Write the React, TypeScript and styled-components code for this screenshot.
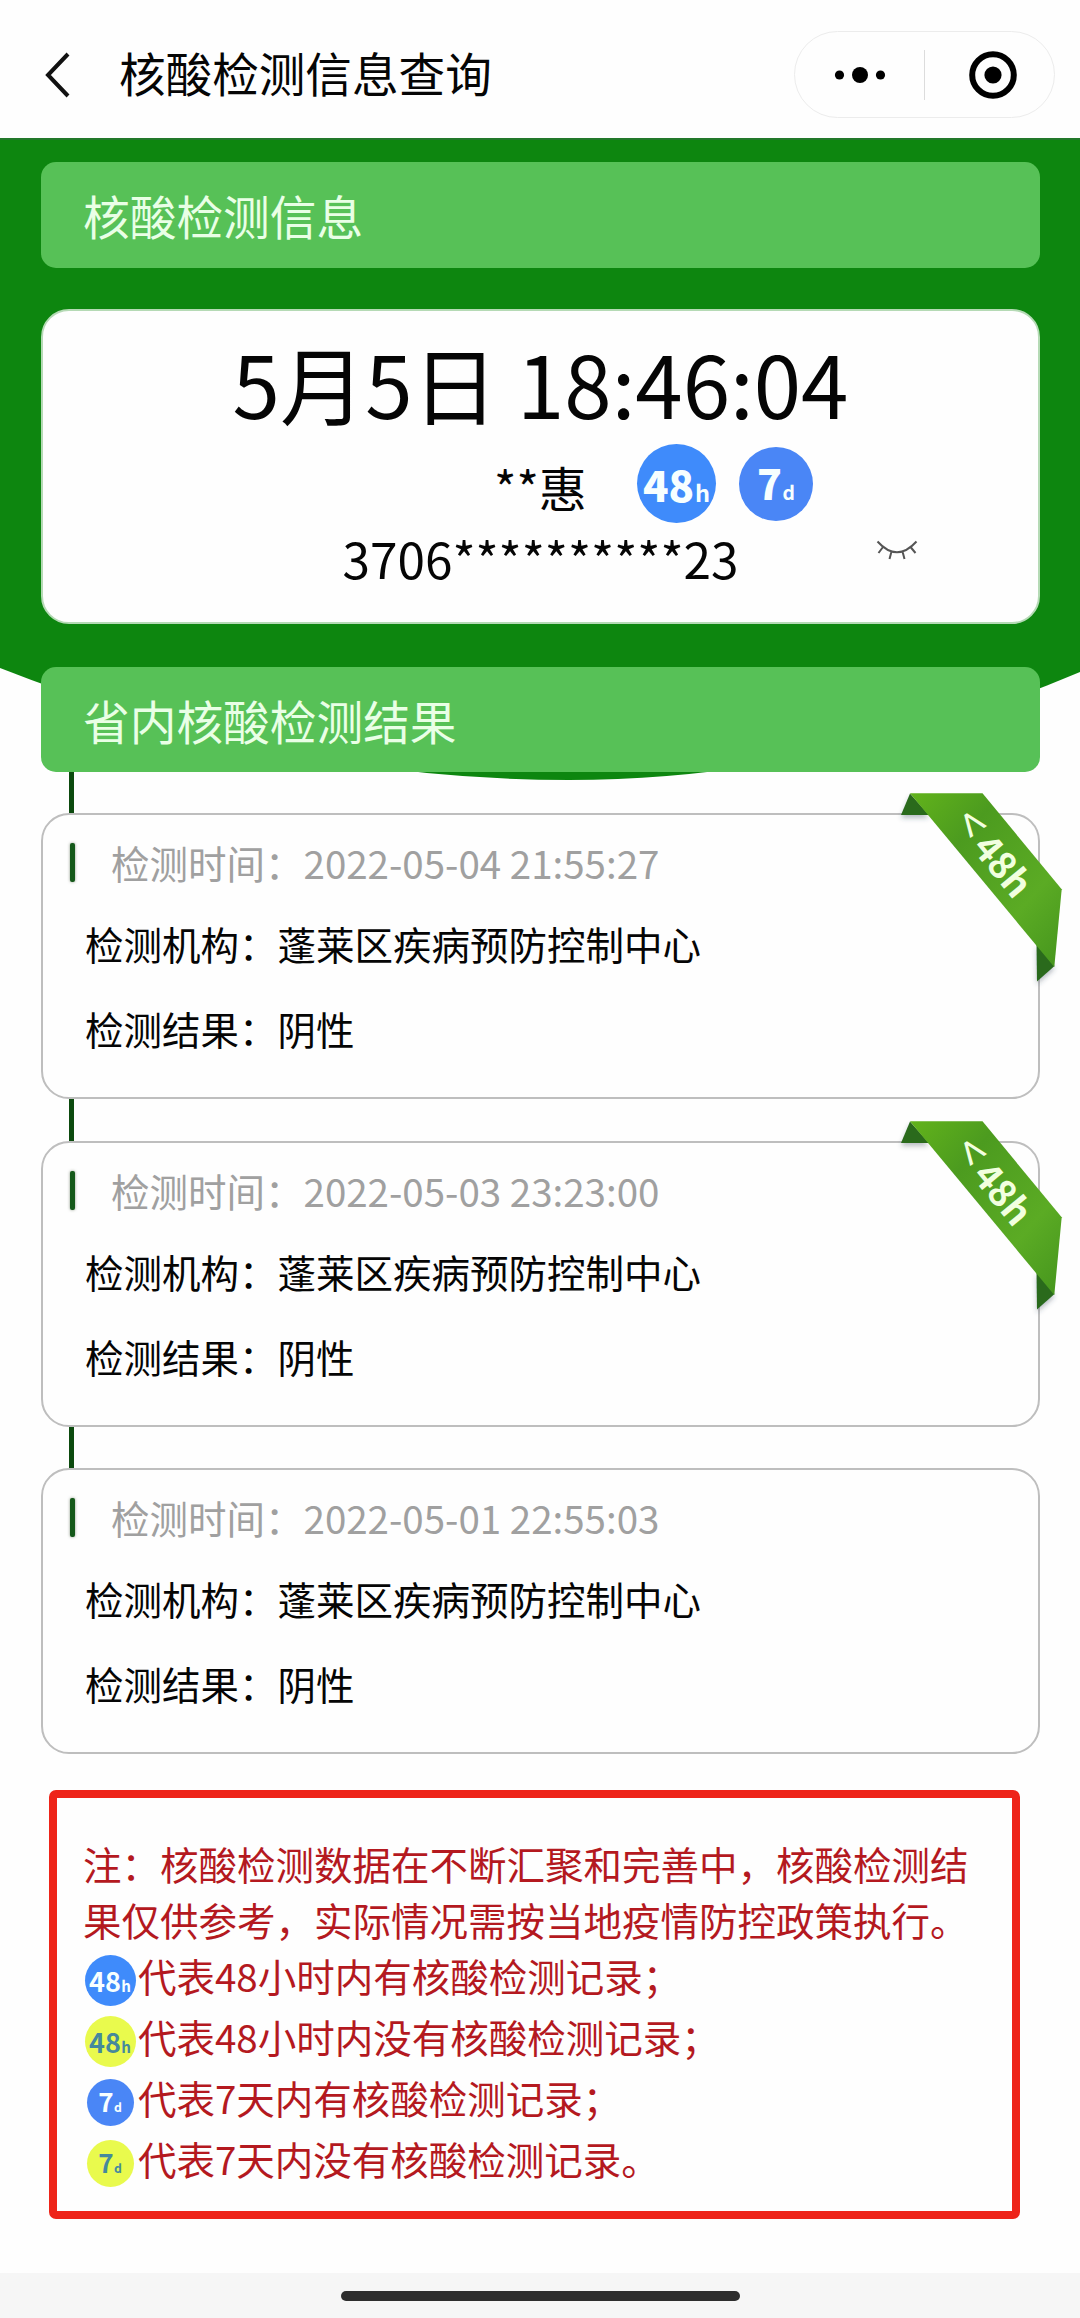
import React from "react";
import styled, { createGlobalStyle } from "styled-components";

const GlobalStyle = createGlobalStyle`
  * { box-sizing: border-box; }
  body {
    margin: 0;
    background: #fefefe;
    color: #050505;
    font-family: "Noto Sans CJK SC", "Noto Sans", sans-serif;
  }
`;

const Page = styled.div`
  width: 1080px;
  height: 2318px;
  display: flex;
  flex-direction: column;
  overflow: hidden;
`;

const Header = styled.header`
  height: 138px;
  flex: none;
  display: flex;
  align-items: center;
  padding: 11px 25px 0 45px;
`;

const BackIcon = styled.svg`
  width: 26px;
  height: 48px;
  flex: none;
`;

const Title = styled.h1`
  margin: 0 auto 0 48px;
  padding-bottom: 5px;
  font-size: 46.6px;
  line-height: 60px;
  font-weight: 400;
  white-space: nowrap;
`;

const Capsule = styled.div`
  width: 261px;
  height: 87px;
  display: flex;
  align-items: center;
  border: 1px solid #ececec;
  border-radius: 44px;
`;

const CapsuleButton = styled.div`
  flex: 1;
  display: flex;
  align-items: center;
  justify-content: center;
`;

const CapsuleDivider = styled.div`
  width: 1px;
  height: 50px;
  background: #dcdcdc;
`;

const Main = styled.main`
  position: relative;
  flex: 1;
  display: flex;
  flex-direction: column;
  padding: 24px 40px 0 41px;
`;

const Backdrop = styled.svg`
  position: absolute;
  left: 0;
  top: 0;
  z-index: -1;
`;

const SectionBar = styled.h2<{ $height: number }>`
  margin: 0;
  flex: none;
  height: ${(p) => p.$height}px;
  padding-left: 42px;
  display: flex;
  align-items: center;
  border-radius: 15px;
  background: #57c157;
  color: #e9ffe6;
  font-size: 46.7px;
  line-height: 60px;
  font-weight: 400;
`;

const InfoCard = styled.section`
  flex: none;
  height: 315px;
  margin: 41px 0 43px;
  padding-top: 21px;
  border: 2px solid #b5dab5;
  border-radius: 28px;
  background: #fefefe;
`;

const DateTime = styled.div`
  height: 100px;
  line-height: 100px;
  font-size: 85.3px;
  text-align: center;
  white-space: pre;
`;

const NameRow = styled.div`
  margin-top: 11px;
  height: 81px;
  padding-left: 451px;
  display: flex;
  align-items: center;
`;

const Name = styled.span`
  width: 143px;
  padding-top: 5px;
  font-size: 48px;
  line-height: 60px;
`;

const IdRow = styled.div`
  margin-top: 4px;
  height: 60px;
  display: grid;
  grid-template-columns: 1fr auto 1fr;
  align-items: center;
`;

const IdNumber = styled.span`
  grid-column: 2;
  font-size: 49.5px;
  line-height: 60px;
`;

const EyeIcon = styled.svg`
  align-self: start;
  margin: 12px 0 0 137px;
  width: 42px;
  height: 20px;
`;

const Circle = styled.span<{
  $size: number;
  $bg: string;
  $fg: string;
  $font: number;
  $lift: number;
  $weight: number;
}>`
  flex: none;
  width: ${(p) => p.$size}px;
  height: ${(p) => p.$size}px;
  border-radius: 50%;
  display: flex;
  align-items: baseline;
  justify-content: center;
  background: ${(p) => p.$bg};
  color: ${(p) => p.$fg};
  font-size: ${(p) => p.$font}px;
  line-height: ${(p) => p.$size - p.$lift * 2}px;
  font-weight: ${(p) => p.$weight};
`;

const Unit = styled.small<{ $scale: number }>`
  margin-left: 0.03em;
  font-size: ${(p) => p.$scale}em;
  line-height: 1;
  font-weight: 700;
`;

const BadgeSlot = styled.span<{ $gap: number }>`
  display: flex;
  margin-left: ${(p) => p.$gap}px;
`;

const Connector = styled.div<{ $height: number }>`
  flex: none;
  width: 5px;
  height: ${(p) => p.$height}px;
  margin-left: 28px;
  background: #0c4a0e;
`;

const ResultCard = styled.article`
  position: relative;
  flex: none;
  height: 286px;
  padding: 20px 0 0 42px;
  border: 2px solid #bebebe;
  border-radius: 28px;
`;

const TimeRow = styled.div`
  height: 54px;
  margin-left: -16px;
  display: flex;
  align-items: center;
`;

const Tick = styled.i`
  flex: none;
  width: 5px;
  height: 39px;
  margin: 0 36px 0 1px;
  border-radius: 2px;
  background: #15591a;
  box-shadow: 0 0 3px rgba(60, 80, 50, 0.6);
`;

const Time = styled.span`
  font-size: 38.5px;
  line-height: 54px;
  color: #a0a0a0;
  white-space: pre;
`;

const Field = styled.div<{ $gap: number }>`
  margin-top: ${(p) => p.$gap}px;
  height: 54px;
  font-size: 38.5px;
  line-height: 54px;
`;

const RibbonArt = styled.svg`
  position: absolute;
  left: 852px;
  top: -27px;
`;

const Notice = styled.section`
  flex: none;
  width: 971px;
  height: 429px;
  margin: 36px 0 0 8px;
  padding: 37px 0 0 27px;
  border: 8px solid #ee2419;
  border-radius: 7px;
  color: #b4191f;
  font-size: 38.5px;
`;

const NoticeText = styled.p`
  margin: 0 0 3px -1px;
  line-height: 56px;
  white-space: nowrap;
`;

const Legend = styled.div`
  height: 61px;
  display: flex;
  align-items: center;
`;

const LegendIcon = styled.span`
  width: 54px;
  display: flex;
  justify-content: center;
  padding-right: 2px;
`;

const LegendText = styled.span`
  line-height: 54px;
  padding-bottom: 11px;
  white-space: nowrap;
`;

const HomeArea = styled.footer`
  flex: none;
  height: 45px;
  padding-top: 18px;
  background: #f6f6f6;
`;

const HomeBar = styled.div`
  width: 399px;
  height: 10px;
  margin: 0 auto;
  border-radius: 5px;
  background: #2e2e2e;
`;

type BadgeProps = { kind: "48h" | "7d"; large?: boolean; missing?: boolean };

function Badge({ kind, large, missing }: BadgeProps) {
  const is48 = kind === "48h";
  const size = large ? (is48 ? 79 : 74) : is48 ? 51 : 47;
  const font = large ? (is48 ? 42 : 41) : is48 ? 27 : 26;
  const bg = missing ? "#e9fa4d" : is48 ? "#3f8bfb" : "#4a86f6";
  return (
    <Circle
      $size={size}
      $bg={bg}
      $fg={missing ? "#45899c" : "#f7ffff"}
      $font={font}
      $lift={is48 ? 0 : 2}
      $weight={large ? 900 : 700}
    >
      {is48 ? "48" : "7"}
      <Unit $scale={is48 ? 0.56 : 0.47}>{is48 ? "h" : "d"}</Unit>
    </Circle>
  );
}

function Ribbon({ id }: { id: string }) {
  return (
    <RibbonArt width="176" height="204" viewBox="895 788 176 204">
      <defs>
        <linearGradient id={id} x1="0" y1="0" x2="1" y2="1">
          <stop offset="0" stopColor="#62b31b" />
          <stop offset="0.3" stopColor="#4c9b1f" />
          <stop offset="0.7" stopColor="#5bab24" />
          <stop offset="1" stopColor="#45951d" />
        </linearGradient>
        <filter id={id + "-shade"} x="-20%" y="-20%" width="140%" height="140%">
          <feDropShadow dx="0" dy="3" stdDeviation="2.5" floodColor="#345" floodOpacity="0.35" />
        </filter>
      </defs>
      <g filter={`url(#${id}-shade)`}>
        <path d="M910 793.5L901 815H929Z" fill="#2b6a1e" />
        <path d="M1036.5 944L1037 981.5L1054.5 966Z" fill="#2b6a1e" />
      </g>
      <path d="M910 793.3H982.5L1061.7 889.3L1054.3 967Z" fill={`url(#${id})`} />
      <g fill="#f1ffdf">
        <text
          transform="translate(972 823) rotate(54)"
          y="17"
          fontSize="46"
          fontWeight="400"
          textAnchor="middle"
        >
          &lt;
        </text>
        <text transform="translate(971 848.5) rotate(50.5)" fontSize="37" fontWeight="700">
          48h
        </text>
      </g>
    </RibbonArt>
  );
}

const results = [
  { time: "2022-05-04 21:55:27", recent: true, lead: 41 },
  { time: "2022-05-03 23:23:00", recent: true, lead: 42 },
  { time: "2022-05-01 22:55:03", recent: false, lead: 41 },
];

const legend: { kind: "48h" | "7d"; missing: boolean; text: string }[] = [
  { kind: "48h", missing: false, text: "代表48小时内有核酸检测记录；" },
  { kind: "48h", missing: true, text: "代表48小时内没有核酸检测记录；" },
  { kind: "7d", missing: false, text: "代表7天内有核酸检测记录；" },
  { kind: "7d", missing: true, text: "代表7天内没有核酸检测记录。" },
];

export default function App() {
  return (
    <Page lang="zh-CN">
      <GlobalStyle />
      <Header>
        <BackIcon viewBox="0 0 26 48" fill="none" stroke="#111" strokeWidth="4">
          <path d="M23 3L3 24L23 45" />
        </BackIcon>
        <Title>核酸检测信息查询</Title>
        <Capsule>
          <CapsuleButton>
            <svg width="52" height="18" viewBox="0 0 52 18">
              <circle cx="5.5" cy="9" r="4.6" />
              <circle cx="26" cy="9" r="8" />
              <circle cx="46.5" cy="9" r="4.6" />
            </svg>
          </CapsuleButton>
          <CapsuleDivider />
          <CapsuleButton>
            <svg width="50" height="50" viewBox="-3 0 50 50" overflow="visible">
              <circle cx="25" cy="25" r="20.8" fill="none" stroke="#000" strokeWidth="6" />
              <circle cx="25" cy="25" r="8.6" />
            </svg>
          </CapsuleButton>
        </Capsule>
      </Header>

      <Main>
        <Backdrop width="1080" height="645" viewBox="0 138 1080 645">
          <path d="M0 138H1080V672Q825 780 569 780Q285 780 0 668Z" fill="#0d860f" />
          <path d="M0 139H1080" stroke="#22782a" strokeWidth="2" />
        </Backdrop>
        <SectionBar $height={106}>核酸检测信息</SectionBar>
        <InfoCard>
          <DateTime>5月5日 18:46:04</DateTime>
          <NameRow>
            <Name>**惠</Name>
            <Badge kind="48h" large />
            <BadgeSlot $gap={23}>
              <Badge kind="7d" large />
            </BadgeSlot>
          </NameRow>
          <IdRow>
            <IdNumber>3706**********23</IdNumber>
            <EyeIcon viewBox="0 0 42 20" fill="none" stroke="#555" strokeWidth="2">
              <path d="M1.5 1.5Q21 23 40.5 1.5M7 7L2.5 13M15.5 11.5L13.5 19M26.5 11.5L28.5 19M34.5 7L39.5 13" />
            </EyeIcon>
          </IdRow>
        </InfoCard>
        <SectionBar $height={105}>省内核酸检测结果</SectionBar>

        {results.map((r, i) => (
          <React.Fragment key={r.time}>
            <Connector $height={r.lead} />
            <ResultCard>
              <TimeRow>
                <Tick />
                <Time>检测时间：{r.time}</Time>
              </TimeRow>
              <Field $gap={27}>检测机构：蓬莱区疾病预防控制中心</Field>
              <Field $gap={31}>检测结果：阴性</Field>
              {r.recent && <Ribbon id={`ribbon${i}`} />}
            </ResultCard>
          </React.Fragment>
        ))}

        <Notice>
          <NoticeText>
            注：核酸检测数据在不断汇聚和完善中，核酸检测结
            <br />
            果仅供参考，实际情况需按当地疫情防控政策执行。
          </NoticeText>
          {legend.map((l) => (
            <Legend key={l.text}>
              <LegendIcon>
                <Badge kind={l.kind} missing={l.missing} />
              </LegendIcon>
              <LegendText>{l.text}</LegendText>
            </Legend>
          ))}
        </Notice>
      </Main>

      <HomeArea>
        <HomeBar />
      </HomeArea>
    </Page>
  );
}
